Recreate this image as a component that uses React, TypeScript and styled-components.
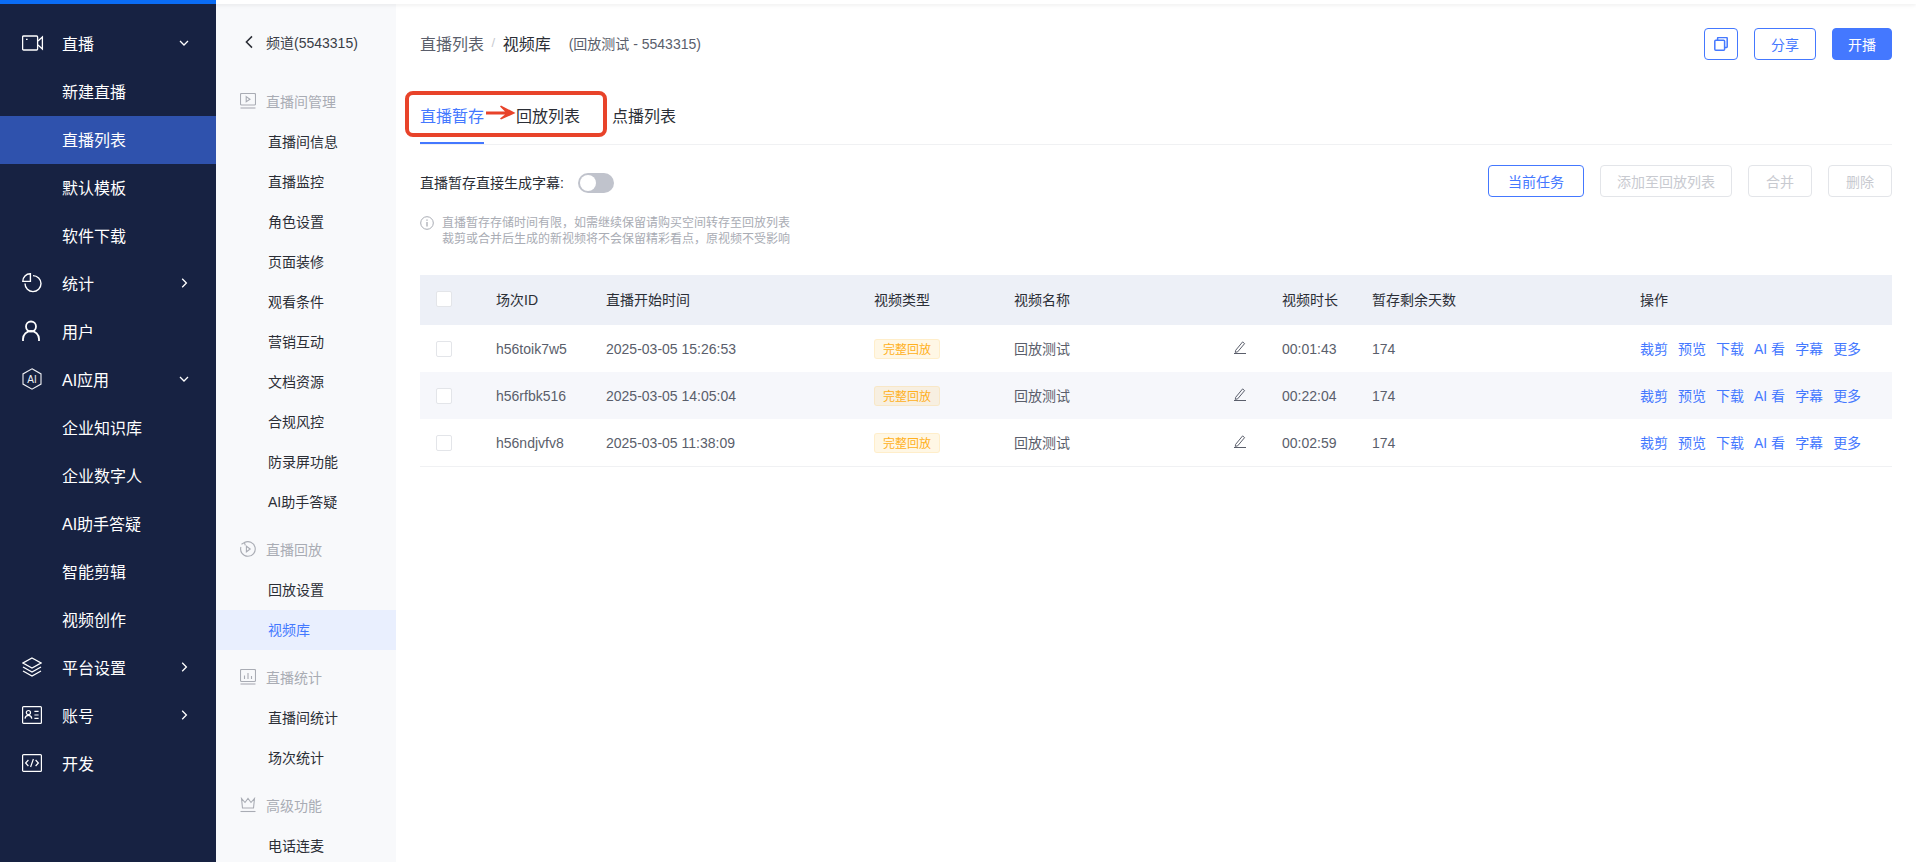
import React from "react";
import styled, { createGlobalStyle } from "styled-components";

const GlobalStyle = createGlobalStyle`
  html, body {
    margin: 0;
    padding: 0;
    height: 100%;
    overflow: hidden;
    background: #fff;
    font-family: "Liberation Sans", "Noto Sans CJK SC", sans-serif;
  }
  * { box-sizing: border-box; }
`;

const Page = styled.div`
  display: flex;
  flex-direction: column;
  height: 100vh;
  overflow: hidden;
`;

const TopBar = styled.div`
  display: flex;
  flex: none;
  height: 4px;
  background: #fff;
  box-shadow: 0 1px 4px rgba(0, 0, 0, 0.08);
  position: relative;
  z-index: 2;
`;

const TopBarAccent = styled.div`
  width: 216px;
  background: #0a6cf5;
`;

const Body = styled.div`
  display: flex;
  flex: 1;
  min-height: 0;
`;

const PrimaryNav = styled.nav`
  flex: none;
  width: 216px;
  padding-top: 16px;
  background: #172242;
  overflow: hidden;
  position: relative;
  z-index: 3;
`;

const PrimaryRow = styled.div<{ $active?: boolean }>`
  display: flex;
  align-items: center;
  height: 48px;
  padding: 0 0 2px 22px;
  font-size: 16px;
  color: #fff;
  background: ${(p) => (p.$active ? "#2f52ad" : "transparent")};
`;

const PrimaryIcon = styled.span`
  display: flex;
  align-items: center;
  width: 40px;
  flex: none;
`;

const PrimaryLabel = styled.span`
  flex: 1;
`;

const RowChevron = styled.span`
  display: flex;
  width: 12px;
  margin-right: 26px;
`;

const SecondaryNav = styled.nav`
  flex: none;
  width: 180px;
  background: #f8f9fb;
  overflow: hidden;
`;

const ChannelHeader = styled.div`
  display: flex;
  align-items: center;
  height: 70px;
  padding: 8px 0 2px 28px;
  font-size: 14px;
  color: #3a3d46;
  gap: 12px;
`;

const GroupTitle = styled.div`
  display: flex;
  align-items: center;
  gap: 10px;
  height: 40px;
  margin-top: 8px;
  padding: 0 0 2px 24px;
  font-size: 14px;
  color: #a9acb4;
`;

const SubItem = styled.div<{ $active?: boolean }>`
  display: flex;
  align-items: center;
  height: 40px;
  padding: 0 0 2px 52px;
  font-size: 14px;
  color: ${(p) => (p.$active ? "#4478ff" : "#2b2e36")};
  background: ${(p) => (p.$active ? "#e9effe" : "transparent")};
`;

const Main = styled.main`
  flex: 1;
  min-width: 0;
  padding: 24px 24px 0;
`;

const PageHeader = styled.header`
  display: flex;
  align-items: center;
  justify-content: space-between;
  height: 32px;
`;

const Breadcrumb = styled.div`
  display: flex;
  align-items: center;
  padding-bottom: 3px;
  font-size: 16px;
  color: #5a5e6b;
`;

const Crumbs = styled.span<{ $current?: boolean }>`
  color: ${(p) => (p.$current ? "#2b2e36" : "#5a5e6b")};
`;

const CrumbSeparator = styled.span`
  margin: 0 7.5px;
  font-size: 13px;
  color: #c8cad0;
`;

const CrumbNote = styled.span`
  margin-left: 18px;
  font-size: 14px;
  color: #5a5e6b;
`;

const ButtonGroup = styled.div`
  display: flex;
  gap: 16px;
`;

const Button = styled.button<{ $w: number; $kind?: "primary" | "disabled" }>`
  display: flex;
  align-items: center;
  justify-content: center;
  width: ${(p) => p.$w}px;
  height: 32px;
  padding: 0 0 1px;
  border-radius: 4px;
  border: 1px solid ${(p) => (p.$kind === "disabled" ? "#e3e5e9" : "#4478ff")};
  background: ${(p) => (p.$kind === "primary" ? "#4478ff" : "#fff")};
  color: ${(p) =>
    p.$kind === "primary" ? "#fff" : p.$kind === "disabled" ? "#c8cad0" : "#4478ff"};
  font: inherit;
  font-size: 14px;
`;

const TabBar = styled.div`
  position: relative;
  display: flex;
  gap: 32px;
  height: 57px;
  margin-top: 28px;
  border-bottom: 1px solid #f0f1f3;
`;

const Tab = styled.div<{ $active?: boolean }>`
  position: relative;
  display: flex;
  align-items: center;
  height: 56px;
  padding-bottom: 2px;
  font-size: 16px;
  color: ${(p) => (p.$active ? "#4478ff" : "#2b2e36")};

  &::after {
    content: "";
    display: ${(p) => (p.$active ? "block" : "none")};
    position: absolute;
    left: 0;
    right: 0;
    bottom: 0;
    height: 2px;
    background: #4478ff;
  }
`;

const CalloutBox = styled.div`
  position: absolute;
  left: -15px;
  top: 3px;
  width: 202px;
  height: 46px;
  border: 4px solid #e8432a;
  border-radius: 8px;
  pointer-events: none;
`;

const CalloutArrow = styled.svg`
  position: absolute;
  left: 66px;
  top: 17px;
`;

const Toolbar = styled.div`
  display: flex;
  justify-content: space-between;
  margin-top: 20px;
`;

const ToggleRow = styled.div`
  display: flex;
  align-items: center;
  height: 20px;
  margin-top: 8px;
  font-size: 14px;
  color: #2b2e36;
  gap: 14px;
`;

const ToggleText = styled.span`
  position: relative;
  top: -1px;
`;

const Toggle = styled.span`
  position: relative;
  display: block;
  width: 36px;
  height: 20px;
  border-radius: 10px;
  background: #c0c3cc;

  &::after {
    content: "";
    position: absolute;
    left: 2px;
    top: 2px;
    width: 16px;
    height: 16px;
    border-radius: 50%;
    background: #fff;
  }
`;

const Note = styled.div`
  display: flex;
  gap: 8px;
  margin-top: 18px;
  font-size: 12px;
  line-height: 16px;
  color: #a9acb4;
`;

const NoteIcon = styled.span`
  display: flex;
  padding-top: 1px;
`;

const Table = styled.div`
  margin-top: 28px;
  border-bottom: 1px solid #f0f1f3;
`;

const columns = "76px 110px 268px 140px 268px 90px 268px 1fr";

const HeadRow = styled.div`
  display: grid;
  grid-template-columns: ${columns};
  align-items: center;
  height: 50px;
  padding-bottom: 2px;
  background: #edf0f7;
  font-size: 14px;
  color: #2b2e36;
`;

const DataRow = styled.div<{ $striped?: boolean }>`
  display: grid;
  grid-template-columns: ${columns};
  align-items: center;
  height: 47px;
  background: ${(p) => (p.$striped ? "#f6f7fb" : "#fff")};
  font-size: 14px;
  color: #5a5e6b;
`;

const CheckCell = styled.div`
  padding-left: 16px;
  display: flex;
`;

const CheckBox = styled.span`
  display: block;
  width: 16px;
  height: 16px;
  border: 1px solid #e3e5e9;
  border-radius: 2px;
  background: #fff;
`;

const Tag = styled.span`
  display: inline-flex;
  align-items: center;
  justify-content: center;
  width: 66px;
  height: 20px;
  padding-bottom: 1px;
  border-radius: 3px;
  border: 1px solid rgba(255, 176, 0, 0.12);
  background: rgba(255, 176, 0, 0.1);
  color: #ffb020;
  font-size: 12px;
`;

const NameCell = styled.div`
  display: flex;
  align-items: center;
  justify-content: space-between;
  padding: 0 36px 2px 0;
`;

const Actions = styled.div`
  display: flex;
  gap: 10px;
  padding-bottom: 2px;
`;

const ActionLink = styled.a`
  color: #4478ff;
  white-space: nowrap;
`;

const ChevronDown = () => (
  <svg width="12" height="12" viewBox="0 0 12 12" fill="none" stroke="#fff" strokeWidth="1.3">
    <path d="M2 4l4 4 4-4" />
  </svg>
);

const ChevronRight = () => (
  <svg width="12" height="12" viewBox="0 0 12 12" fill="none" stroke="#fff" strokeWidth="1.3">
    <path d="M4.2 1.8L8.4 6l-4.2 4.2" />
  </svg>
);

const VideoIcon = () => (
  <svg width="22" height="16" viewBox="0 0 22 16" fill="none" stroke="#fff" strokeWidth="1.3">
    <rect x="0.6" y="1" width="15" height="14" rx="1" />
    <path d="M16 6l4.4-4v12L16 10" />
    <path d="M4 4.4h1.6" />
  </svg>
);

const PieIcon = () => (
  <svg width="20" height="20" viewBox="0 0 20 20" fill="none" stroke="#fff" strokeWidth="1.4">
    <path d="M8.4 .8a7.4 7.4 0 0 0-7.6 7.6h7.6z" />
    <path d="M11 2.6a8 8 0 1 1-8 8" />
  </svg>
);

const UserIcon = () => (
  <svg width="18" height="22" viewBox="0 0 18 22" fill="none" stroke="#fff" strokeWidth="1.8">
    <circle cx="9" cy="6.5" r="5" />
    <path d="M1 21v-2a8 8 0 0 1 16 0v2" />
  </svg>
);

const AiIcon = () => (
  <svg width="20" height="22" viewBox="0 0 20 22" fill="none" stroke="#f0f1f5" strokeWidth="1.1">
    <path d="M10 .8l9 5.1v10.2l-9 5.1-9-5.1V5.9z" />
    <text x="10" y="14.8" textAnchor="middle" fontSize="10" fill="#f0f1f5" stroke="none" fontFamily="Liberation Sans">
      AI
    </text>
  </svg>
);

const LayersIcon = () => (
  <svg width="20" height="20" viewBox="0 0 20 20" fill="none" stroke="#fff" strokeWidth="1.3">
    <path d="M10 1l9 5-9 5-9-5z" />
    <path d="M1 10l9 5 9-5" />
    <path d="M1 14l9 5 9-5" />
  </svg>
);

const AccountIcon = () => (
  <svg width="20" height="18" viewBox="0 0 20 18" fill="none" stroke="#fff" strokeWidth="1.2">
    <rect x="0.6" y="0.6" width="18.8" height="16.8" rx="1" />
    <circle cx="6.4" cy="6.6" r="2.1" />
    <path d="M3 12.6c.3-2.2 1.6-3.2 3.4-3.2s3.1 1 3.4 3.2" />
    <path d="M12.4 5.4h4.2M12.4 9h4.2M12.4 12.4h4.2" />
  </svg>
);

const CodeIcon = () => (
  <svg width="20" height="18" viewBox="0 0 20 18" fill="none" stroke="#fff" strokeWidth="1.2">
    <rect x="0.6" y="0.6" width="18.8" height="16.8" rx="1" />
    <path d="M6.4 6L3.6 9l2.8 3M13.6 6l2.8 3-2.8 3M11.4 5L8.6 13" />
  </svg>
);

const BackIcon = () => (
  <svg width="10" height="14" viewBox="0 0 10 14" fill="none" stroke="#2b2e36" strokeWidth="1.5">
    <path d="M8 1.4L2.4 7 8 12.6" />
  </svg>
);

const ScreenPlayIcon = () => (
  <svg width="16" height="16" viewBox="0 0 16 16" fill="none" stroke="#a9acb4" strokeWidth="1.1">
    <rect x="0.5" y="0.5" width="15" height="11.5" rx="1" />
    <path d="M6.2 3.6l3.8 2.6-3.8 2.6z" />
    <path d="M0.5 15h15" />
  </svg>
);

const ReplayIcon = () => (
  <svg width="16" height="16" viewBox="0 0 16 16" fill="none" stroke="#a9acb4" strokeWidth="1.1">
    <path d="M4.4 1.6A7.3 7.3 0 1 1 .9 6" />
    <path d="M1.5 3.2l2.9-1.6.9 2.8" />
    <path d="M6.4 5.2l3.8 2.8-3.8 2.8z" />
  </svg>
);

const ChartIcon = () => (
  <svg width="16" height="16" viewBox="0 0 16 16" fill="none" stroke="#a9acb4" strokeWidth="1.1">
    <rect x="0.5" y="0.5" width="15" height="12" rx="1" />
    <path d="M4.5 6.5v3.5M8 4v6M11.5 7v3" />
    <path d="M0.5 15h15" />
  </svg>
);

const CrownIcon = () => (
  <svg width="16" height="16" viewBox="0 0 16 16" fill="none" stroke="#a9acb4" strokeWidth="1.1">
    <path d="M1.5 1.5l1 9.5h11l1-9.5L11 5.5 8 1.5 5 5.5z" />
    <path d="M0.5 14.5h15" />
  </svg>
);

const CopyIcon = () => (
  <svg width="14" height="14" viewBox="0 0 14 14" fill="none" stroke="#4478ff" strokeWidth="1.5">
    <rect x="0.8" y="3.2" width="9.8" height="10" rx="1" />
    <path d="M3.6 3V1.2a.6.6 0 0 1 .6-.6h8.4a.6.6 0 0 1 .6.6v8.6a.6.6 0 0 1-.6.6h-2" />
  </svg>
);

const InfoIcon = () => (
  <svg width="14" height="14" viewBox="0 0 14 14" fill="none" stroke="#a9acb4" strokeWidth="1">
    <circle cx="7" cy="7" r="6.3" />
    <path d="M7 6v4.4" strokeWidth="1.3" />
    <path d="M7 3.4v1.4" strokeWidth="1.3" />
  </svg>
);

const PencilIcon = () => (
  <svg width="12" height="13" viewBox="0 0 12 13" fill="none" stroke="#5a5e6b" strokeWidth="1">
    <path d="M1.6 9.4L8.6.9l2 1.7-6.9 8.2-2.4.6z" />
    <path d="M0 12.5h12" />
  </svg>
);

type PrimaryEntry = {
  label: string;
  icon?: React.ReactNode;
  chevron?: "down" | "right";
  active?: boolean;
};

const primaryNav: PrimaryEntry[] = [
  { label: "直播", icon: <VideoIcon />, chevron: "down" },
  { label: "新建直播" },
  { label: "直播列表", active: true },
  { label: "默认模板" },
  { label: "软件下载" },
  { label: "统计", icon: <PieIcon />, chevron: "right" },
  { label: "用户", icon: <UserIcon /> },
  { label: "AI应用", icon: <AiIcon />, chevron: "down" },
  { label: "企业知识库" },
  { label: "企业数字人" },
  { label: "AI助手答疑" },
  { label: "智能剪辑" },
  { label: "视频创作" },
  { label: "平台设置", icon: <LayersIcon />, chevron: "right" },
  { label: "账号", icon: <AccountIcon />, chevron: "right" },
  { label: "开发", icon: <CodeIcon /> },
];

const secondaryNav = [
  {
    title: "直播间管理",
    icon: <ScreenPlayIcon />,
    items: ["直播间信息", "直播监控", "角色设置", "页面装修", "观看条件", "营销互动", "文档资源", "合规风控", "防录屏功能", "AI助手答疑"],
  },
  { title: "直播回放", icon: <ReplayIcon />, items: ["回放设置", "视频库"] },
  { title: "直播统计", icon: <ChartIcon />, items: ["直播间统计", "场次统计"] },
  { title: "高级功能", icon: <CrownIcon />, items: ["电话连麦"] },
];

const rows = [
  { id: "h56toik7w5", start: "2025-03-05 15:26:53", duration: "00:01:43" },
  { id: "h56rfbk516", start: "2025-03-05 14:05:04", duration: "00:22:04" },
  { id: "h56ndjvfv8", start: "2025-03-05 11:38:09", duration: "00:02:59" },
];

const actions = ["裁剪", "预览", "下载", "AI 看", "字幕", "更多"];

export default function App() {
  return (
    <Page>
      <GlobalStyle />
      <TopBar>
        <TopBarAccent />
      </TopBar>
      <Body>
        <PrimaryNav>
          {primaryNav.map((entry) => (
            <PrimaryRow key={entry.label} $active={entry.active}>
              <PrimaryIcon>{entry.icon}</PrimaryIcon>
              <PrimaryLabel>{entry.label}</PrimaryLabel>
              {entry.chevron && (
                <RowChevron>{entry.chevron === "down" ? <ChevronDown /> : <ChevronRight />}</RowChevron>
              )}
            </PrimaryRow>
          ))}
        </PrimaryNav>

        <SecondaryNav>
          <ChannelHeader>
            <BackIcon />
            频道(5543315)
          </ChannelHeader>
          {secondaryNav.map((group) => (
            <React.Fragment key={group.title}>
              <GroupTitle>
                {group.icon}
                {group.title}
              </GroupTitle>
              {group.items.map((item) => (
                <SubItem key={item} $active={item === "视频库"}>
                  {item}
                </SubItem>
              ))}
            </React.Fragment>
          ))}
        </SecondaryNav>

        <Main>
          <PageHeader>
            <Breadcrumb>
              <Crumbs>直播列表</Crumbs>
              <CrumbSeparator>/</CrumbSeparator>
              <Crumbs $current>视频库</Crumbs>
              <CrumbNote>(回放测试 - 5543315)</CrumbNote>
            </Breadcrumb>
            <ButtonGroup>
              <Button $w={34}>
                <CopyIcon />
              </Button>
              <Button $w={62}>分享</Button>
              <Button $w={60} $kind="primary">
                开播
              </Button>
            </ButtonGroup>
          </PageHeader>

          <TabBar>
            <Tab $active>直播暂存</Tab>
            <Tab>回放列表</Tab>
            <Tab>点播列表</Tab>
            <CalloutBox />
            <CalloutArrow width="30" height="16" viewBox="0 0 30 16" fill="#e8432a">
              <path d="M0 6.4h19L14 1.5l1-1L29.5 8 15 14.6l-1-1 5-4.2H0z" />
            </CalloutArrow>
          </TabBar>

          <Toolbar>
            <ToggleRow>
              <ToggleText>直播暂存直接生成字幕:</ToggleText>
              <Toggle />
            </ToggleRow>
            <ButtonGroup>
              <Button $w={96}>当前任务</Button>
              <Button $w={132} $kind="disabled">
                添加至回放列表
              </Button>
              <Button $w={64} $kind="disabled">
                合并
              </Button>
              <Button $w={64} $kind="disabled">
                删除
              </Button>
            </ButtonGroup>
          </Toolbar>

          <Note>
            <NoteIcon>
              <InfoIcon />
            </NoteIcon>
            <div>
              直播暂存存储时间有限，如需继续保留请购买空间转存至回放列表
              <br />
              裁剪或合并后生成的新视频将不会保留精彩看点，原视频不受影响
            </div>
          </Note>

          <Table>
            <HeadRow>
              <CheckCell>
                <CheckBox />
              </CheckCell>
              <div>场次ID</div>
              <div>直播开始时间</div>
              <div>视频类型</div>
              <div>视频名称</div>
              <div>视频时长</div>
              <div>暂存剩余天数</div>
              <div>操作</div>
            </HeadRow>
            {rows.map((row, i) => (
              <DataRow key={row.id} $striped={i === 1}>
                <CheckCell>
                  <CheckBox />
                </CheckCell>
                <div>{row.id}</div>
                <div>{row.start}</div>
                <div>
                  <Tag>完整回放</Tag>
                </div>
                <NameCell>
                  回放测试
                  <PencilIcon />
                </NameCell>
                <div>{row.duration}</div>
                <div>174</div>
                <Actions>
                  {actions.map((action) => (
                    <ActionLink key={action}>{action}</ActionLink>
                  ))}
                </Actions>
              </DataRow>
            ))}
          </Table>
        </Main>
      </Body>
    </Page>
  );
}
